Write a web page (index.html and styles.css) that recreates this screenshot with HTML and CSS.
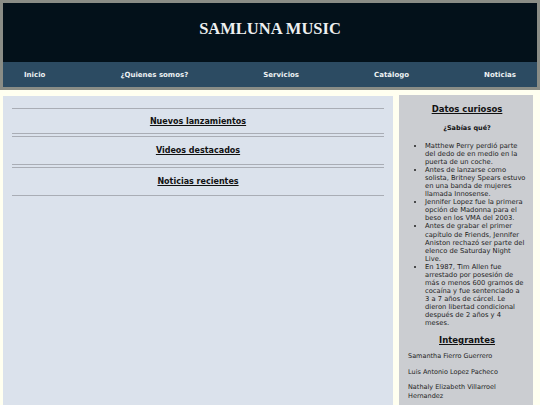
FILE: index.html
```html
<!DOCTYPE html>
<html lang="es">
<head>
<meta charset="utf-8">
<title>Samluna Music</title>
<link rel="stylesheet" href="styles.css">
</head>
<body>
<header class="site-header">
  <div class="banner"><h1 class="title">SAMLUNA MUSIC</h1></div>
  <nav class="nav">
    <a class="nav-link">Inicio</a>
    <a class="nav-link">¿Quienes somos?</a>
    <a class="nav-link">Servicios</a>
    <a class="nav-link">Catálogo</a>
    <a class="nav-link">Noticias</a>
  </nav>
</header>
<div class="layout">
  <main class="main">
    <section class="block block-first"><h2 class="block-title">Nuevos lanzamientos</h2></section>
    <section class="block"><h2 class="block-title">Videos destacados</h2></section>
    <section class="block"><h2 class="block-title">Noticias recientes</h2></section>
  </main>
  <aside class="sidebar">
    <h3 class="side-title">Datos curiosos</h3>
    <h4 class="side-sub">¿Sabías qué?</h4>
    <ul class="facts">
      <li>Matthew Perry perdió parte del dedo de en medio en la puerta de un coche.</li>
      <li>Antes de lanzarse como solista, Britney Spears estuvo en una banda de mujeres llamada Innosense.</li>
      <li>Jennifer Lopez fue la primera opción de Madonna para el beso en los VMA del 2003.</li>
      <li>Antes de grabar el primer capítulo de Friends, Jennifer Aniston rechazó ser parte del elenco de Saturday Night Live.</li>
      <li>En 1987, Tim Allen fue arrestado por posesión de más o menos 600 gramos de cocaína y fue sentenciado a 3 a 7 años de cárcel. Le dieron libertad condicional después de 2 años y 4 meses.</li>
    </ul>
    <h3 class="side-title members-title">Integrantes</h3>
    <p class="member">Samantha Fierro Guerrero</p>
    <p class="member">Luis Antonio Lopez Pacheco</p>
    <p class="member">Nathaly Elizabeth Villarroel Hernandez</p>
  </aside>
</div>
</body>
</html>
```
FILE: styles.css
```css
html, body {
  margin: 0;
  padding: 0;
}
body {
  background: #fffff0;
  font-family: "DejaVu Sans", Verdana, sans-serif;
  color: #1a1a1a;
  height: 405px;
  overflow: hidden;
}
.site-header {
  border: 3px solid #8a8d86;
}
.banner {
  background: #03111a;
  height: 59px;
  display: flex;
  align-items: center;
  justify-content: center;
}
.title {
  margin: 0;
  font-family: "Liberation Serif", "Times New Roman", serif;
  font-weight: bold;
  font-size: 16.5px;
  color: #eef0f0;
  padding-bottom: 8px;
}
.nav {
  background: #2c4b62;
  height: 25px;
  display: flex;
  align-items: center;
  justify-content: space-between;
  padding: 0 21px;
}
.nav-link {
  color: #eef2f4;
  font-weight: bold;
  font-size: 7px;
}
.layout {
  display: flex;
  align-items: flex-start;
  gap: 6px;
  padding: 5px 7px 0 3px;
}
.main {
  flex: 0 0 390px;
  background: #dbe2ec;
  margin-top: 1px;
  height: 320px;
  padding: 12px 9px 0;
  box-sizing: border-box;
  display: flex;
  flex-direction: column;
  gap: 2px;
}
.block {
  border-top: 1px solid #a9adb5;
  border-bottom: 1px solid #a9adb5;
  box-sizing: border-box;
  height: 29px;
  display: flex;
  align-items: center;
  justify-content: center;
}
.block-first {
  height: 26px;
}
.block-title {
  margin: 0;
  font-size: 8px;
  font-weight: bold;
  text-decoration: underline;
  color: #111;
}
.sidebar {
  flex: 1;
  background: #cbcdd1;
  height: 320px;
  padding: 9px 7px 0 9px;
  box-sizing: border-box;
}
.side-title {
  margin: 0;
  text-align: center;
  font-size: 8.5px;
  font-weight: bold;
  text-decoration: underline;
  color: #111;
}
.side-sub {
  margin: 10px 0 0;
  text-align: center;
  font-size: 6.5px;
  font-weight: bold;
  color: #111;
}
.facts {
  margin: 10px 0 0;
  padding-left: 17px;
  font-size: 6.75px;
  line-height: 8.05px;
  list-style: disc;
  color: #1e1e1e;
}
.members-title {
  margin-top: 8px;
}
.member {
  margin: 7px 0 0;
  font-size: 6.5px;
  line-height: 8.5px;
  color: #1e1e1e;
}
```
